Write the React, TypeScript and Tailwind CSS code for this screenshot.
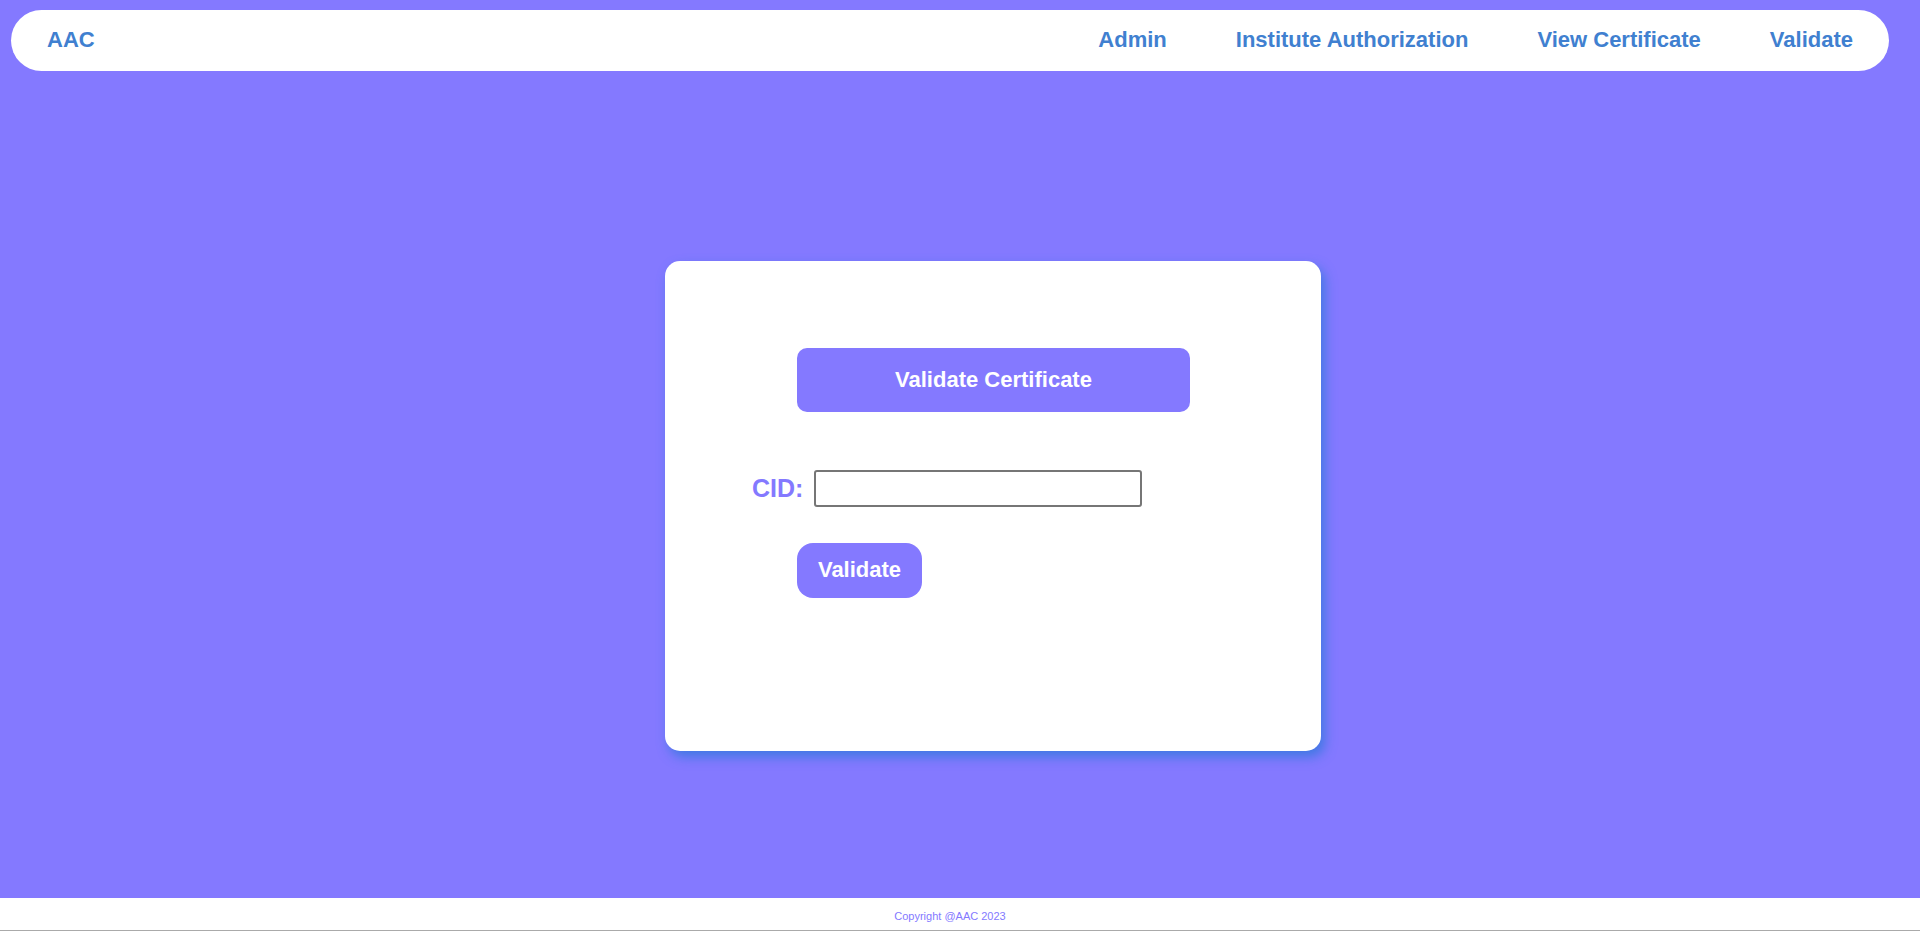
import React from 'react'

const links = ['Admin', 'Institute Authorization', 'View Certificate', 'Validate']

export default function App() {
  return (
    <div className="min-h-screen flex flex-col bg-[#8479ff] font-['Liberation_Sans',Arial,sans-serif]">
      <nav className="mt-[10px] ml-[11px] w-[1878px] h-[61px] shrink-0 rounded-full bg-white flex items-center justify-between pl-[36px] pr-[36px] pb-[2px]">
        <a href="#" className="text-[22px] font-bold text-[#4080d0]">AAC</a>
        <div className="flex items-center gap-[69px]">
          {links.map(l => (
            <a key={l} href="#" className="text-[22px] font-bold text-[#4080d0]">{l}</a>
          ))}
        </div>
      </nav>

      <main className="flex-1">
        <div className="mt-[190px] ml-[665px] w-[656px] h-[490px] bg-white rounded-[15px] shadow-[4px_6px_12px_rgba(60,120,225,0.95)]">
          <div className="pt-[87px] pl-[132px]">
            <div className="w-[393px] h-[64px] pb-[2px] rounded-[10px] bg-[#8479ff] flex items-center justify-center text-[22px] font-bold text-white">
              Validate Certificate
            </div>
          </div>
          <div className="mt-[58px] pl-[87px] flex items-center">
            <label className="text-[25px] font-bold text-[#8479ff] leading-none">CID:</label>
            <input type="text" className="ml-[11px] w-[328px] h-[37px] border-2 border-[#767676] rounded-[3px] bg-white outline-none" />
          </div>
          <div className="mt-[36px] pl-[132px]">
            <button className="w-[125px] h-[55px] pb-[2px] rounded-[16px] bg-[#8479ff] text-[22px] font-bold text-white">
              Validate
            </button>
          </div>
        </div>
      </main>

      <footer className="h-[33px] shrink-0 bg-white border-b border-[#aaaaaa] pt-[12px] pr-[20px] text-center text-[11px] leading-[13px] text-[#8479ff]">
        Copyright @AAC 2023
      </footer>
    </div>
  )
}
